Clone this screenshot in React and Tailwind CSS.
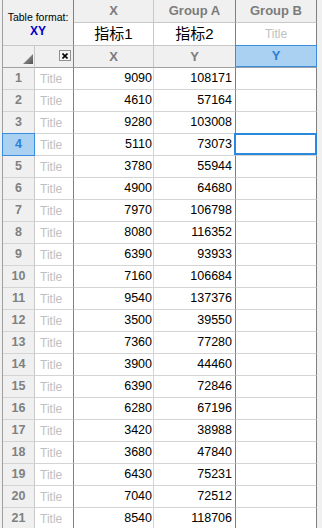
import React from "react";

const rows = [
  [9090, 108171], [4610, 57164], [9280, 103008], [5110, 73073], [3780, 55944],
  [4900, 64680], [7970, 106798], [8080, 116352], [6390, 93933], [7160, 106684],
  [9540, 137376], [3500, 39550], [7360, 77280], [3900, 44460], [6390, 72846],
  [6280, 67196], [3420, 38988], [3680, 47840], [6430, 75231], [7040, 72512],
  [8540, 118706],
];

const font = { fontFamily: '"Liberation Sans", Arial, "Noto Sans CJK SC", sans-serif' };

export default function App() {
  return (
    <div className="w-[322px] h-[528px] overflow-hidden bg-[#f0f0f0] pl-[2px]" style={font}>
      <div className="grid grid-cols-[32px_39px_80px_82px_81px] grid-rows-[23px_23px_22px_repeat(21,22px)] border-l border-[#a0a0a0] w-[315px]">
        {/* top-left merged */}
        <div className="col-span-2 row-span-2 bg-[#f0f0f0] border-r border-b border-r-[#808080] border-b-[#c8c8c8] flex flex-col items-center pt-[10px]">
          <div className="text-[10.5px] leading-[14px] text-black">Table format:</div>
          <div className="text-[12px] leading-[14px] font-bold text-[#0000c8]">XY</div>
        </div>
        {/* row 1 headers */}
        <div className="bg-[#f0f0f0] border-r border-b border-r-[#c8c8c8] border-b-[#c8c8c8] flex items-center justify-center text-[13px] font-bold text-[#7c7c7c]">X</div>
        <div className="bg-[#f0f0f0] border-r border-b border-r-[#808080] border-b-[#c8c8c8] flex items-center justify-center text-[13px] font-bold text-[#7c7c7c]">Group A</div>
        <div className="bg-[#f0f0f0] border-r border-b border-r-[#808080] border-b-[#c8c8c8] flex items-center justify-center text-[13px] font-bold text-[#7c7c7c]">Group B</div>
        {/* row 2 */}
        <div className="bg-white border-r border-b border-r-[#c8c8c8] border-b-[#c8c8c8] flex items-center justify-center text-[15px] text-black">指标1</div>
        <div className="bg-white border-r border-b border-r-[#808080] border-b-[#c8c8c8] flex items-center justify-center text-[15px] text-black">指标2</div>
        <div className="bg-white border-r border-b border-r-[#808080] border-b-[#c8c8c8] flex items-center justify-center text-[12px] text-[#c0c0c0]">Title</div>
        {/* row 3 */}
        <div className="relative bg-[#f0f0f0] border-r border-b border-r-[#c8c8c8] border-b-[#a0a0a0]">
          <svg className="absolute left-[20px] top-[8px]" width="10" height="10" viewBox="0 0 10 10">
            <defs>
              <linearGradient id="tg" x1="0" y1="0" x2="1" y2="1">
                <stop offset="0" stopColor="#b0b0b0" />
                <stop offset="1" stopColor="#505050" />
              </linearGradient>
            </defs>
            <polygon points="10,0 10,10 0,10" fill="url(#tg)" />
          </svg>
        </div>
        <div className="relative bg-[#f0f0f0] border-r border-b border-r-[#808080] border-b-[#a0a0a0]">
          <div className="absolute left-[24px] top-[4px] w-[12px] h-[11px] border border-[#909090] bg-[#f4f4f4] flex items-center justify-center">
            <svg width="6" height="6" viewBox="0 0 6 6">
              <path d="M0.5 0.5 L5.5 5.5 M5.5 0.5 L0.5 5.5" stroke="#000" strokeWidth="1.6" />
            </svg>
          </div>
        </div>
        <div className="bg-[#f0f0f0] border-r border-b border-r-[#c8c8c8] border-b-[#a0a0a0] flex items-center justify-center text-[13px] font-bold text-[#7c7c7c]">X</div>
        <div className="bg-[#f0f0f0] border-r border-b border-r-[#808080] border-b-[#a0a0a0] flex items-center justify-center text-[13px] font-bold text-[#7c7c7c]">Y</div>
        <div className="relative bg-[#f0f0f0] border-r border-b border-r-[#808080] border-b-[#a0a0a0]">
          <div className="absolute left-[-1px] top-[-1px] w-[82px] h-[22px] bg-[#aad0f2] border border-[#3a8ee0] flex items-center justify-center text-[13px] font-bold text-[#2a7fd6]">Y</div>
        </div>
        {/* data rows */}
        {rows.map(([x, y], i) => {
          const sel = i === 3;
          return (
            <React.Fragment key={i}>
              <div className="relative bg-[#f0f0f0] border-r border-b border-r-[#c8c8c8] border-b-[#d4d4d4] flex items-center justify-center text-[12.5px] font-bold text-[#808080]">
                {sel ? (
                  <div className="absolute left-[-1px] top-[-1px] w-[33px] h-[23px] bg-[#aad0f2] border border-[#3a8ee0] flex items-center justify-center text-[#2a7fd6]">{i + 1}</div>
                ) : (
                  i + 1
                )}
              </div>
              <div className="bg-white border-r border-b border-r-[#808080] border-b-[#d4d4d4] flex items-center pl-[5px] text-[12px] text-[#c0c0c0]">Title</div>
              <div className="bg-white border-r border-b border-r-[#d4d4d4] border-b-[#d4d4d4] flex items-center justify-end pr-[1px] text-[12.5px] text-black">{x}</div>
              <div className="bg-white border-r border-b border-r-[#808080] border-b-[#d4d4d4] flex items-center justify-end pr-[3px] text-[12.5px] text-black">{y}</div>
              <div className="relative bg-white border-r border-b border-r-[#808080] border-b-[#d4d4d4]">
                {sel && (
                  <div className="absolute left-[-2px] top-[-1px] w-[83px] h-[22px] border-2 border-[#2b88dc]" />
                )}
              </div>
            </React.Fragment>
          );
        })}
      </div>
    </div>
  );
}
